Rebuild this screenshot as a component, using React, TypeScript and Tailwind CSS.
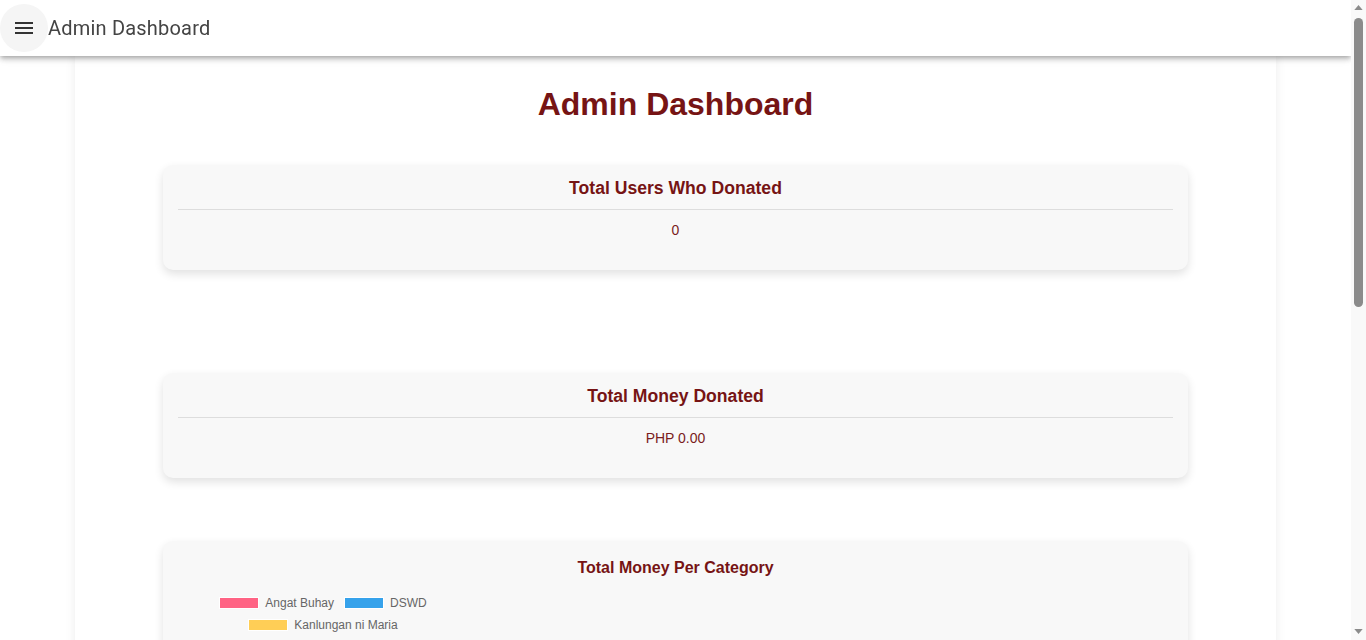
import React from "react";

const legend = [
  { label: "Angat Buhay", color: "bg-[#ff6384]" },
  { label: "DSWD", color: "bg-[#36a2eb]" },
  { label: "Kanlungan ni Maria", color: "bg-[#ffce56]" },
];

function StatCard({ title, value }: { title: string; value: string }) {
  return (
    <div className="rounded-[10px] bg-[#f8f8f8] px-[15px] pt-[13px] pb-[32px] shadow-[0_4px_10px_rgba(0,0,0,0.12)]">
      <h3 className="m-0 pb-[10px] text-center text-[17.6px] leading-[21px] font-bold text-[#761414]">
        {title}
      </h3>
      <div className="border-t border-[#dddddd]" />
      <p className="mt-3 text-center text-[14px] leading-4 text-[#7a1c1c]">{value}</p>
    </div>
  );
}

function Scrollbar() {
  return (
    <div className="flex h-full w-[15px] shrink-0 flex-col items-center bg-[#f9f9f9]">
      <svg viewBox="0 0 10 6" className="mt-[5px] h-[5px] w-[9px] fill-[#8b8b8b]">
        <path d="M5 0 10 6H0z" />
      </svg>
      <div className="mt-2 h-[289px] w-[9px] rounded-full bg-[#8b8b8b]" />
      <div className="flex-1" />
      <svg viewBox="0 0 10 6" className="mb-[6px] h-[5px] w-[9px] fill-[#8b8b8b]">
        <path d="M0 0h10L5 6z" />
      </svg>
    </div>
  );
}

export default function App() {
  return (
    <div className="flex h-screen bg-white font-['Liberation_Sans',Arial,sans-serif]">
      <div className="flex-1 overflow-y-auto [scrollbar-width:none]">
        <header className="sticky top-0 z-10 flex h-14 items-center bg-white shadow-[0_2px_4px_-1px_rgba(0,0,0,0.2),0_4px_5px_0_rgba(0,0,0,0.14),0_1px_10px_0_rgba(0,0,0,0.12)]">
          <button className="flex h-12 w-12 items-center justify-center rounded-full bg-[#f5f5f5] text-[#333]">
            <svg viewBox="0 0 24 24" className="h-6 w-6" fill="currentColor">
              <path d="M3 18h18v-2H3zm0-5h18v-2H3zm0-7v2h18V6z" />
            </svg>
          </button>
          <span className="font-['Roboto',sans-serif] text-[20px] tracking-[0.2px] text-[#444]">Admin Dashboard</span>
        </header>

        <main className="mx-auto w-[1201px] bg-white px-[88px] pt-[30px] pb-[60px] shadow-[0_0_10px_rgba(0,0,0,0.08)]">
          <h1 className="text-center text-[32px] leading-[37px] font-bold text-[#761414]">Admin Dashboard</h1>

          <div className="mt-[42px]">
            <StatCard title="Total Users Who Donated" value="0" />
          </div>

          <div className="mt-[103px]">
            <StatCard title="Total Money Donated" value="PHP 0.00" />
          </div>

          <div className="mt-[63px] h-[680px] rounded-[10px] bg-[#f8f8f8] px-[15px] pt-[18px] shadow-[0_4px_10px_rgba(0,0,0,0.12)]">
            <h3 className="text-center text-[16px] leading-[18px] font-bold text-[#761414]">
              Total Money Per Category
            </h3>
            <div className="mt-[15px] flex w-[290px] flex-wrap justify-center gap-x-[10px]">
              {legend.map((item) => (
                <div key={item.label} className="flex h-[22px] items-center gap-[6px]">
                  <span className={`h-3 w-10 border border-white ${item.color}`} />
                  <span className="text-[12px] text-[#666]">{item.label}</span>
                </div>
              ))}
            </div>
          </div>
        </main>
      </div>
      <Scrollbar />
    </div>
  );
}
